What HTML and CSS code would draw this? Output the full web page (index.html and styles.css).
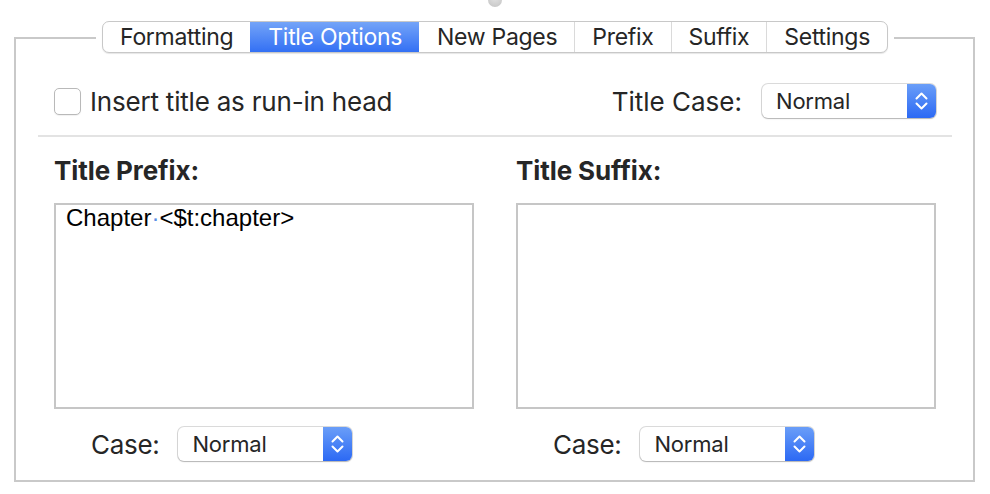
FILE: index.html
```html
<!DOCTYPE html>
<html lang="en">
<head>
<meta charset="utf-8">
<title>Title Options</title>
<link rel="stylesheet" href="styles.css">
</head>
<body>
<div class="knob"></div>
<main class="panel">
  <div class="tabs-wrap">
    <nav class="tabs">
      <span class="tab">Formatting</span>
      <span class="tab active">Title Options</span>
      <span class="tab">New Pages</span>
      <span class="tab">Prefix</span>
      <span class="tab">Suffix</span>
      <span class="tab">Settings</span>
    </nav>
  </div>
  <div class="row-top">
    <label class="check"><span class="box"></span>Insert title as run-in head</label>
    <div class="field">
      <span class="label">Title Case:</span>
      <div class="popup">
        <span class="popup-value">Normal</span>
        <span class="popup-arrows"><svg width="29" height="34" viewBox="0 0 29 34"><path d="M9.5 14.5 L14.5 9.5 L19.5 14.5 M9.5 19.5 L14.5 24.5 L19.5 19.5" fill="none" stroke="#fff" stroke-width="2" stroke-linecap="round" stroke-linejoin="round"/></svg></span>
      </div>
    </div>
  </div>
  <hr class="sep">
  <div class="cols">
    <section class="col">
      <h2 class="col-title">Title Prefix:</h2>
      <div class="textbox">Chapter<span class="ws">·</span>&lt;$t:chapter&gt;</div>
      <div class="case-row">
        <span class="label">Case:</span>
        <div class="popup">
          <span class="popup-value">Normal</span>
          <span class="popup-arrows"><svg width="29" height="34" viewBox="0 0 29 34"><path d="M9.5 14.5 L14.5 9.5 L19.5 14.5 M9.5 19.5 L14.5 24.5 L19.5 19.5" fill="none" stroke="#fff" stroke-width="2" stroke-linecap="round" stroke-linejoin="round"/></svg></span>
        </div>
      </div>
    </section>
    <section class="col">
      <h2 class="col-title">Title Suffix:</h2>
      <div class="textbox"></div>
      <div class="case-row">
        <span class="label">Case:</span>
        <div class="popup">
          <span class="popup-value">Normal</span>
          <span class="popup-arrows"><svg width="29" height="34" viewBox="0 0 29 34"><path d="M9.5 14.5 L14.5 9.5 L19.5 14.5 M9.5 19.5 L14.5 24.5 L19.5 19.5" fill="none" stroke="#fff" stroke-width="2" stroke-linecap="round" stroke-linejoin="round"/></svg></span>
        </div>
      </div>
    </section>
  </div>
</main>
</body>
</html>
```
FILE: styles.css
```css
html, body {
  margin: 0;
  background: #fff;
}
body {
  font-family: Inter, "Noto Sans", sans-serif;
  color: #262626;
  position: relative;
  height: 494px;
  overflow: hidden;
}
.knob {
  position: absolute;
  left: 488px;
  top: -7px;
  width: 14px;
  height: 14px;
  border-radius: 50%;
  background: radial-gradient(circle at 50% 35%, #e2e2e2, #c2c2c2);
}
.panel {
  margin: 37px 15px 0 14px;
  height: 445px;
  box-sizing: border-box;
  border: 2px solid #c9c9c9;
  padding: 0 37px 0 38px;
  display: flex;
  flex-direction: column;
}
.tabs-wrap {
  align-self: center;
  margin-top: -18px;
  padding: 0 6px;
  background: #fff;
}
.tabs {
  display: flex;
  height: 32px;
  box-sizing: border-box;
  border: 1px solid #c8c8c8;
  border-radius: 7px;
  background: #fff;
  box-shadow: 0 1px 1px rgba(0,0,0,0.10);
  overflow: hidden;
}
.tab {
  padding: 0 17px;
  font-size: 23px;
  letter-spacing: -0.3px;
  line-height: 31px;
  color: #262626;
  white-space: nowrap;
}
.tab + .tab {
  border-left: 1px solid #dadada;
}
.tab.active {
  background: linear-gradient(#74a4f8, #3370f4);
  color: #fff;
  border-left-color: transparent;
}
.tab.active + .tab {
  border-left-color: transparent;
}
.row-top {
  margin-top: 31px;
  height: 34px;
  display: flex;
  align-items: center;
  justify-content: space-between;
}
.check {
  display: flex;
  align-items: center;
  gap: 9px;
  font-size: 26px;
  letter-spacing: -0.2px;
}
.box {
  width: 27px;
  height: 27px;
  box-sizing: border-box;
  border: 1px solid #b9b9b9;
  border-radius: 5px;
  background: #fff;
  box-shadow: 0 1px 1px rgba(0,0,0,0.06);
}
.field {
  display: flex;
  align-items: center;
  gap: 20px;
}
.label {
  font-size: 26px;
}
.popup {
  display: flex;
  width: 174px;
  height: 34px;
  border-radius: 6px;
  background: #fff;
  overflow: hidden;
  box-shadow: 0 0 0 1px rgba(0,0,0,0.14), 0 1px 1.5px rgba(0,0,0,0.18);
}
.popup-value {
  flex: 1;
  padding-left: 14px;
  font-size: 22px;
  letter-spacing: -0.2px;
  line-height: 34px;
}
.popup-arrows {
  width: 29px;
  display: flex;
  background: linear-gradient(#6a9ef8, #2c69f4);
}
.sep {
  margin: 17px -16px 0;
  border: 0;
  height: 2px;
  background: #e3e3e3;
}
.cols {
  display: grid;
  grid-template-columns: 1fr 1fr;
  column-gap: 42px;
  margin-top: 18px;
}
.col-title {
  margin: 0;
  font-size: 26px;
  font-weight: 700;
  line-height: 32px;
  letter-spacing: -0.1px;
  color: #262626;
}
.textbox {
  margin-top: 16px;
  height: 206px;
  box-sizing: border-box;
  border: 2px solid #c6c6c6;
  padding: 0 10px;
  font-family: "Liberation Sans", Arial, sans-serif;
  font-size: 24px;
  line-height: 26px;
  color: #000;
}
.ws {
  color: #5b8fe6;
}
.case-row {
  display: flex;
  align-items: center;
  gap: 19px;
  margin-top: 18px;
  padding-left: 37px;
}
.case-row .label {
  letter-spacing: -0.3px;
}
```
